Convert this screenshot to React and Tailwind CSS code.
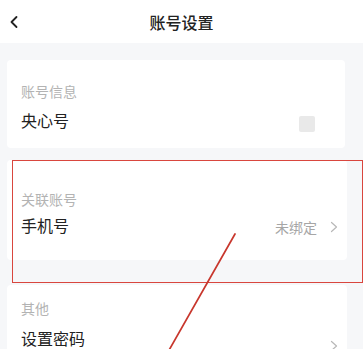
import { ChevronLeft } from 'lucide-react';

const font = { fontFamily: '"Noto Sans CJK SC", "Noto Sans", sans-serif' };

function Arrow({ className = '' }) {
  return (
    <svg width="8" height="12" viewBox="0 0 8 12" className={className}>
      <polyline points="1.5,1.5 6.5,6 1.5,10.5" fill="none" stroke="#b8b8b8" strokeWidth="1.2" strokeLinecap="round" strokeLinejoin="round" />
    </svg>
  );
}

export default function App() {
  return (
    <div className="relative w-[363px] h-[349px] overflow-hidden bg-[#f6f7f9]" style={font}>
      {/* Header */}
      <div className="relative flex h-[43px] items-center justify-center bg-white">
        <ChevronLeft size={20} strokeWidth={2.2} className="absolute left-[4px] text-[#222]" />
        <span className="text-[16px] text-[#222] font-medium">账号设置</span>
      </div>

      <div className="pt-[17px] pl-[7px]">
        {/* 账号信息 */}
        <div className="w-[338px] h-[88px] rounded-[4px] bg-white pl-[14px] pt-[21px]">
          <div className="text-[14px] leading-[20px] text-[#b3b3b3]">账号信息</div>
          <div className="mt-[7px] flex items-center justify-between pr-[30px]">
            <span className="text-[16px] leading-[24px] text-[#222]">央心号</span>
            <span className="mt-[8px] h-[16px] w-[16px] rounded-[2px] bg-[#e9e9e9]" />
          </div>
        </div>

        {/* 关联账号 */}
        <div className="mt-[12px] w-[340px] h-[100px] rounded-[4px] bg-white pl-[14px] pt-[29px]">
          <div className="text-[14px] leading-[20px] text-[#b3b3b3]">关联账号</div>
          <div className="mt-[4px] flex items-center justify-between pr-[9px]">
            <span className="text-[16px] leading-[24px] text-[#222]">手机号</span>
            <div className="mt-[4px] flex items-center gap-[13px]">
              <span className="text-[14px] leading-[20px] text-[#a6a6a6]">未绑定</span>
              <Arrow />
            </div>
          </div>
        </div>

        {/* 其他 */}
        <div className="mt-[25px] w-[340px] h-[80px] rounded-[4px] bg-white pl-[14px] pt-[13px]">
          <div className="text-[14px] leading-[20px] text-[#b3b3b3]">其他</div>
          <div className="mt-[6px] flex items-center justify-between pr-[9px]">
            <span className="text-[16px] leading-[24px] text-[#222]">设置密码</span>
            <Arrow className="mt-[16px]" />
          </div>
        </div>
      </div>

      {/* annotation overlay */}
      <div className="absolute left-[12px] top-[160px] h-[123px] w-[351px] border-[1.5px] border-[#d9463e]" />
      <svg className="absolute left-0 top-0" width="363" height="349">
        <line x1="235" y1="234" x2="168" y2="352" stroke="#c8372d" strokeWidth="1.7" strokeLinecap="round" />
      </svg>
    </div>
  );
}
